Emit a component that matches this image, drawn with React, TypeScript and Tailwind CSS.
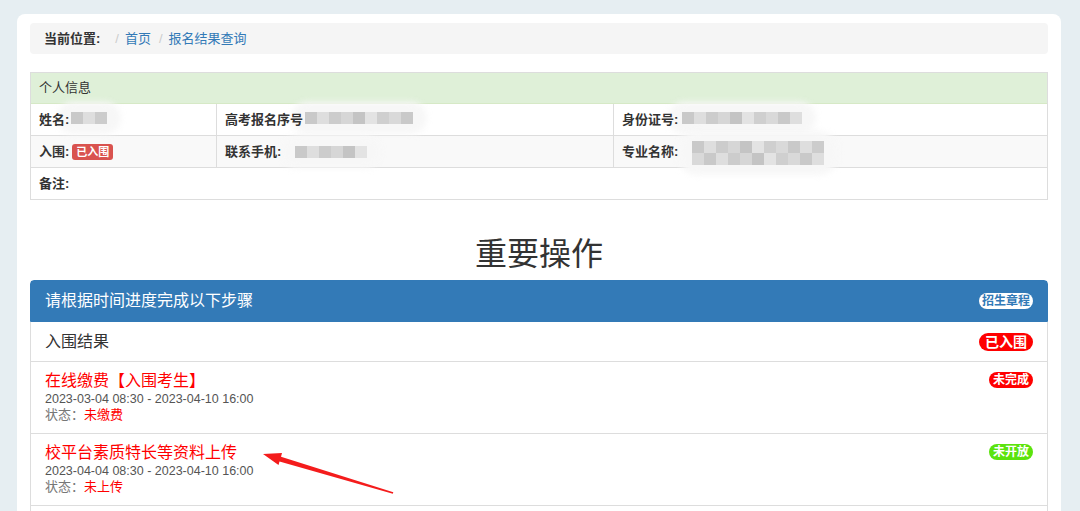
const FONT = { fontFamily: '"Liberation Sans", "Noto Sans CJK SC", sans-serif' };

const SHADES = ["#c9c9c9", "#d6d6d6", "#cfcfcf", "#dedede", "#c4c4c4", "#d9d9d9", "#cccccc", "#e3e3e3"];

function Mosaic({ cols, rows = 1 }: { cols: number; rows?: number }) {
  return (
    <div className="relative inline-block">
      <div className="absolute -inset-x-[14px] -inset-y-[10px] rounded-[20px] bg-[#f7f7f7] blur-[3px]" />
      <div className="relative flex flex-col">
        {Array.from({ length: rows }).map((_, r) => (
          <div key={r} className="flex">
            {Array.from({ length: cols }).map((_, c) => (
              <span
                key={c}
                className="block h-[12px] w-[12px]"
                style={{ backgroundColor: SHADES[(c * 3 + r * 5) % SHADES.length] }}
              />
            ))}
          </div>
        ))}
      </div>
    </div>
  );
}

function Badge({ text, className }: { text: string; className: string }) {
  return (
    <span className={`inline-flex items-center justify-center rounded-[10px] font-bold text-white ${className}`}>
      {text}
    </span>
  );
}

export default function App() {
  return (
    <div className="relative min-h-[511px] overflow-hidden bg-[#e6eef2] pt-[14px]" style={FONT}>
      <div className="ml-[17px] w-[1044px] rounded-t-[8px] bg-white px-[13px] pt-[9px] pb-[20px]">
        {/* breadcrumb */}
        <div className="flex h-[31px] items-center rounded-[4px] bg-[#f5f5f5] px-[14px] text-[13px] text-[#333]">
          <span className="font-bold">当前位置:</span>
          <span className="ml-[15px] text-[#ccc]">/</span>
          <span className="ml-[6px] text-[#337ab7]">首页</span>
          <span className="ml-[8px] text-[#ccc]">/</span>
          <span className="ml-[6px] text-[#337ab7]">报名结果查询</span>
        </div>

        {/* personal info */}
        <div className="mt-[18px] border border-[#ddd] text-[13px] text-[#333]">
          <div className="flex h-[31px] items-center border-b border-[#d6e9c6] bg-[#dff0d8] px-[8px]">个人信息</div>
          <div className="flex h-[32px] border-b border-[#ddd]">
            <div className="flex w-[186px] items-center border-r border-[#ddd] px-[8px]">
              <span className="relative z-10 font-bold">姓名:</span>
              <span className="ml-[2px]"><Mosaic cols={3} /></span>
            </div>
            <div className="flex w-[397px] items-center border-r border-[#ddd] px-[8px]">
              <span className="relative z-10 font-bold">高考报名序号</span>
              <span className="ml-[2px]"><Mosaic cols={9} /></span>
            </div>
            <div className="flex flex-1 items-center px-[8px]">
              <span className="relative z-10 font-bold">身份证号:</span>
              <span className="ml-[4px]"><Mosaic cols={10} /></span>
            </div>
          </div>
          <div className="flex h-[32px] border-b border-[#ddd] bg-[#f9f9f9]">
            <div className="flex w-[186px] items-center border-r border-[#ddd] px-[8px]">
              <span className="font-bold">入围:</span>
              <span className="ml-[3px] rounded-[3px] bg-[#d9534f] px-[4px] text-[11px] leading-[16px] font-bold text-white">已入围</span>
            </div>
            <div className="flex w-[397px] items-center border-r border-[#ddd] px-[8px]">
              <span className="relative z-10 font-bold">联系手机:</span>
              <span className="ml-[14px] mt-[4px]"><Mosaic cols={6} /></span>
            </div>
            <div className="flex flex-1 items-center px-[8px]">
              <span className="relative z-10 font-bold">专业名称:</span>
              <span className="ml-[14px]"><Mosaic cols={11} rows={2} /></span>
            </div>
          </div>
          <div className="flex h-[31px] items-center px-[8px]">
            <span className="font-bold">备注:</span>
          </div>
        </div>

        <h1 className="mt-[34px] mb-[6px] text-center text-[32px] leading-[40px] text-[#333]">重要操作</h1>

        {/* steps panel */}
        <div className="rounded-t-[4px] border border-[#337ab7]">
          <div className="flex h-[40px] items-center justify-between bg-[#337ab7] px-[14px] text-[16px] text-white">
            <span>请根据时间进度完成以下步骤</span>
            <span className="rounded-[10px] bg-white px-[3px] text-[12px] leading-[16px] font-bold text-[#337ab7]">招生章程</span>
          </div>
        </div>
        <div className="border-x border-[#ddd]">
          <div className="flex h-[40px] items-center justify-between border-b border-[#ddd] px-[14px] text-[16px] text-[#333]">
            <span>入围结果</span>
            <Badge text="已入围" className="bg-[#ff0000] px-[6px] text-[14px] leading-[18px]" />
          </div>

          <div className="flex items-start justify-between border-b border-[#ddd] px-[14px] pt-[9px] pb-[10px]">
            <div>
              <div className="text-[16px] leading-[20px] text-[#ff0000]">在线缴费【入围考生】</div>
              <div className="text-[12.5px] leading-[16px] text-[#555]">2023-03-04 08:30 - 2023-04-10 16:00</div>
              <div className="text-[13px] leading-[16px]">
                <span className="text-[#777]">状态：</span>
                <span className="text-[#ff0000]">未缴费</span>
              </div>
            </div>
            <div className="flex pt-[1px]">
              <Badge text="未完成" className="bg-[#ff0000] px-[4px] text-[12px] leading-[16px]" />
            </div>
          </div>

          <div className="flex items-start justify-between border-b border-[#ddd] px-[14px] pt-[9px] pb-[10px]">
            <div>
              <div className="text-[16px] leading-[20px] text-[#ff0000]">校平台素质特长等资料上传</div>
              <div className="text-[12.5px] leading-[16px] text-[#555]">2023-04-04 08:30 - 2023-04-10 16:00</div>
              <div className="text-[13px] leading-[16px]">
                <span className="text-[#777]">状态：</span>
                <span className="text-[#ff0000]">未上传</span>
              </div>
            </div>
            <div className="flex pt-[1px]">
              <Badge text="未开放" className="bg-[#5be30d] px-[4px] text-[12px] leading-[16px]" />
            </div>
          </div>
          <div className="h-[40px]" />
        </div>
      </div>

      {/* annotation arrow */}
      <svg className="pointer-events-none absolute top-0 left-0" width="1080" height="511" viewBox="0 0 1080 511">
        <polygon
          fill="#f41c1c"
          points="263,454 282,453 281,456.8 393.3,492.3 392.8,493.7 279.5,461.6 278.5,465"
        />
      </svg>
    </div>
  );
}
